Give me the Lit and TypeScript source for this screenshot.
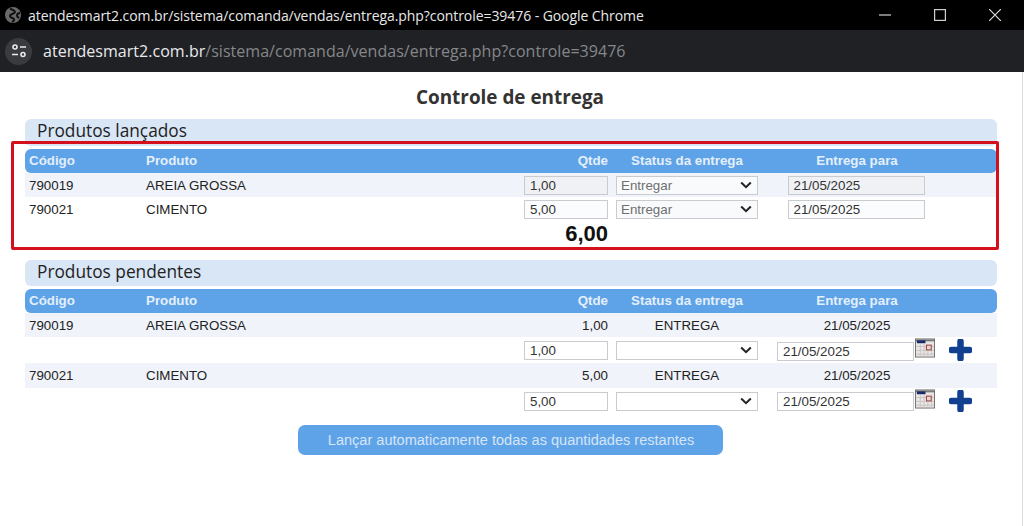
import { LitElement, html, css, svg } from "lit";
import { customElement } from "lit/decorators.js";

const URL_PATH = "/sistema/comanda/vendas/entrega.php?controle=39476";
const CHEVRON = `url("data:image/svg+xml,%3Csvg xmlns='http://www.w3.org/2000/svg' width='12' height='8' viewBox='0 0 12 8'%3E%3Cpath d='M1.2 1.5L6 6.2l4.8-4.7' fill='none' stroke='%23222' stroke-width='2'/%3E%3C/svg%3E")`;

@customElement("app-root")
export class AppRoot extends LitElement {
  static styles = css`
    :host { display: block; width: 1024px; height: 526px; overflow: hidden; background: linear-gradient(to left, #fff 1px, #dcdcdc 1px, #dcdcdc 2px, #fff 2px); font-family: "Liberation Sans", Arial, sans-serif; color: #222; }
    * { box-sizing: border-box; }
    .titlebar { height: 30px; background: #000; color: #e8e8e8; display: flex; align-items: center; padding-left: 5px; font: 14px "Open Sans", sans-serif; letter-spacing: -0.07px; }
    .titlebar .globe { width: 16px; height: 16px; margin-right: 7px; flex: none; }
    .titlebar .t { flex: 1; white-space: nowrap; }
    .win { display: flex; align-items: center; gap: 43px; padding-right: 23px; }
    .win svg { width: 12px; height: 12px; display: block; }
    .addrbar { height: 42px; background: #202124; display: flex; align-items: center; padding-left: 5px; font: 16px "Open Sans", sans-serif; letter-spacing: 0.03px; white-space: nowrap; color: #e8eaed; }
    .pill { width: 27px; height: 27px; border-radius: 50%; background: #3a3b3e; margin-right: 11px; display: flex; align-items: center; justify-content: center; flex: none; }
    .pill svg { width: 16px; height: 16px; }
    .addrbar .path { color: #85878a; }
    main { padding: 0 27px 0 25px; }
    h1 { margin: 0; height: 47px; padding-top: 13px; padding-right: 2px; text-align: center; font: bold 18.9px/24px "Open Sans", sans-serif; color: #333; }
    .sec { height: 26px; background: #d9e6f5; border-radius: 6px; padding-left: 12px; font: 17.3px/24px "Open Sans", sans-serif; color: #222; margin-bottom: 3px; }
    .sec.first { height: 27px; }
    .wrap { position: relative; margin-bottom: 15px; }
    .redbox { position: absolute; left: -14px; right: -2px; top: -8px; bottom: -5px; border: 3.5px solid #d3101c; border-radius: 2px; pointer-events: none; }
    .row { display: grid; grid-template-columns: 117px 378px 92px 150px 190px 45px; align-items: center; font-size: 13.33px; height: 24px; color: #222; }
    .row > div { padding: 0 4px; white-space: nowrap; }
    .head { background: #5ea3e8; border-radius: 6px; color: #e4effb; font-weight: bold; padding-bottom: 2px; }
    .alt { background: #f0f3f9; }
    .alt.mid { height: 25px; }
    .tall { height: 26px; }
    .r { text-align: right; }
    .c { text-align: center; }
    .row > .cell { display: flex; align-items: center; justify-content: center; padding: 0; }
    .row > .dcell { padding-right: 2px; }
    .row > .qcell { display: flex; justify-content: flex-end; }
    input, select { font: 13.33px "Liberation Sans", Arial, sans-serif; color: #333; border: 1px solid #c9cbce; border-radius: 0; background-color: #fff; height: 19px; padding: 0 5px; margin: 0; outline: none; }
    select { padding-left: 4px; appearance: none; -webkit-appearance: none; background-image: ${css([CHEVRON] as unknown as TemplateStringsArray)}; background-repeat: no-repeat; background-position: right 5px center; background-size: 12px 8px; }
    .qty { width: 84px; }
    .stat { width: 142px; }
    .date { width: 137px; }
    .pdate { margin-top: 2px; }
    .mid-inputs .pdate { margin-top: 1px; }
    .locked { background-color: #eff1f5; }
    .stat.locked, .stat.faint { background-color: #f9fafc; }
    .faint { background-color: #fbfcfd; }
    .grey { color: #6f6f6f; }
    .total { font-size: 22px; font-weight: bold; height: 24px; color: #111; }
    .cal { width: 20px; height: 20px; margin-left: 1px; margin-top: -5px; flex: none; display: block; }
    .plus { width: 23px; height: 22px; display: block; }
    .row > .addcell { justify-content: flex-start; margin-left: -3px; }
    .actions { display: flex; justify-content: center; padding: 11px 0 0 0; margin-left: -1px; }
    button { width: 425px; height: 30px; background: #5ea3e8; border: 0; border-radius: 7px; color: #d5e5f7; font: 14.56px "Liberation Sans", Arial, sans-serif; padding: 0 0 0 1px; }
  `;

  private head() {
    return html`<div class="row head"><div>Código</div><div>Produto</div><div class="r">Qtde</div><div class="c">Status da entrega</div><div class="c">Entrega para</div><div></div></div>`;
  }

  private launched(code: string, name: string, qty: string, cls: string, alt: boolean) {
    return html`<div class="row ${alt ? "alt" : ""}">
      <div>${code}</div><div>${name}</div>
      <div class="qcell"><input class="qty ${cls}" .value=${qty} /></div>
      <div class="cell"><select class="stat ${cls} grey"><option>Entregar</option></select></div>
      <div class="cell dcell"><input class="date ${cls}" .value=${"21/05/2025"} /></div>
      <div></div>
    </div>`;
  }

  private calendar() {
    return html`<svg class="cal" viewBox="0 0 21 20">
      <rect x="0.5" y="0.5" width="20" height="19" fill="#e9e6e4" stroke="#6e6e6e"/>
      <rect x="1" y="1" width="19" height="2" fill="#7a7a7a"/>
      <rect x="2" y="2" width="9" height="3" fill="#1b2a6b"/>
      ${[8, 12, 16].map((y) => svg`<rect x="1" y="${y}" width="19" height="1" fill="#c9c4c4"/>`)}
      ${[5, 9, 13, 17].map((x) => svg`<rect x="${x}" y="6" width="1" height="13" fill="#c9c4c4"/>`)}
      <rect x="12" y="7" width="5" height="5" fill="#e8d8d0" stroke="#9c3b3b"/>
    </svg>`;
  }

  private pending(code: string, name: string, qty: string, mid: boolean) {
    return html`<div class="row alt ${mid ? "mid" : ""}">
        <div>${code}</div><div>${name}</div><div class="r">${qty}</div><div class="c">ENTREGA</div><div class="c dc">21/05/2025</div><div></div>
      </div>
      <div class="row tall ${mid ? "mid-inputs" : ""}">
        <div></div><div></div>
        <div class="qcell"><input class="qty" .value=${qty} /></div>
        <div class="cell"><select class="stat"><option></option></select></div>
        <div class="cell dcell"><input class="date pdate" .value=${"21/05/2025"} />${this.calendar()}</div>
        <div class="cell addcell"><svg class="plus" viewBox="0 0 23 22"><path d="M11.5 2.5v17M2.5 11h18" stroke="#10408f" stroke-width="6.5" stroke-linecap="round" fill="none"/></svg></div>
      </div>`;
  }

  render() {
    return html`
      <div class="titlebar">
        <svg class="globe" viewBox="0 0 16 16"><circle cx="8" cy="8" r="8" fill="#6a6a6a"/><path d="M5 1.5c2 1.5 5 1.5 5 3.5S5 6.5 5 9s3 1.5 4 3-2 3-2 3M15 6c-2 0-3 1-3 2.5s1 2 2 2.5" stroke="#111" stroke-width="2" fill="none"/></svg>
        <span class="t">atendesmart2.com.br${URL_PATH} - Google Chrome</span>
        <div class="win">
          <svg viewBox="0 0 12 12"><path d="M0 6h12" stroke="#cfcfcf" stroke-width="1.2"/></svg>
          <svg viewBox="0 0 12 12"><rect x=".6" y=".6" width="10.8" height="10.8" fill="none" stroke="#cfcfcf" stroke-width="1.2"/></svg>
          <svg viewBox="0 0 12 12"><path d="M0 0l12 12M12 0L0 12" stroke="#dcdcdc" stroke-width="1.2"/></svg>
        </div>
      </div>
      <div class="addrbar">
        <span class="pill"><svg viewBox="0 0 16 16" fill="none" stroke="#e8eaed" stroke-width="1.6"><circle cx="4" cy="4" r="2"/><path d="M9 4h6M1 11.5h6"/><circle cx="12" cy="11.5" r="2"/></svg></span>
        <span>atendesmart2.com.br</span><span class="path">${URL_PATH}</span>
      </div>
      <main>
        <h1>Controle de entrega</h1>
        <div class="sec first">Produtos lançados</div>
        <div class="wrap">
          ${this.head()}
          ${this.launched("790019", "AREIA GROSSA", "1,00", "locked", true)}
          ${this.launched("790021", "CIMENTO", "5,00", "faint", false)}
          <div class="row"><div></div><div></div><div class="r total">6,00</div></div>
          <div class="redbox"></div>
        </div>
        <div class="sec">Produtos pendentes</div>
        ${this.head()}
        ${this.pending("790019", "AREIA GROSSA", "1,00", false)}
        ${this.pending("790021", "CIMENTO", "5,00", true)}
        <div class="actions"><button>Lançar automaticamente todas as quantidades restantes</button></div>
      </main>
    `;
  }
}
